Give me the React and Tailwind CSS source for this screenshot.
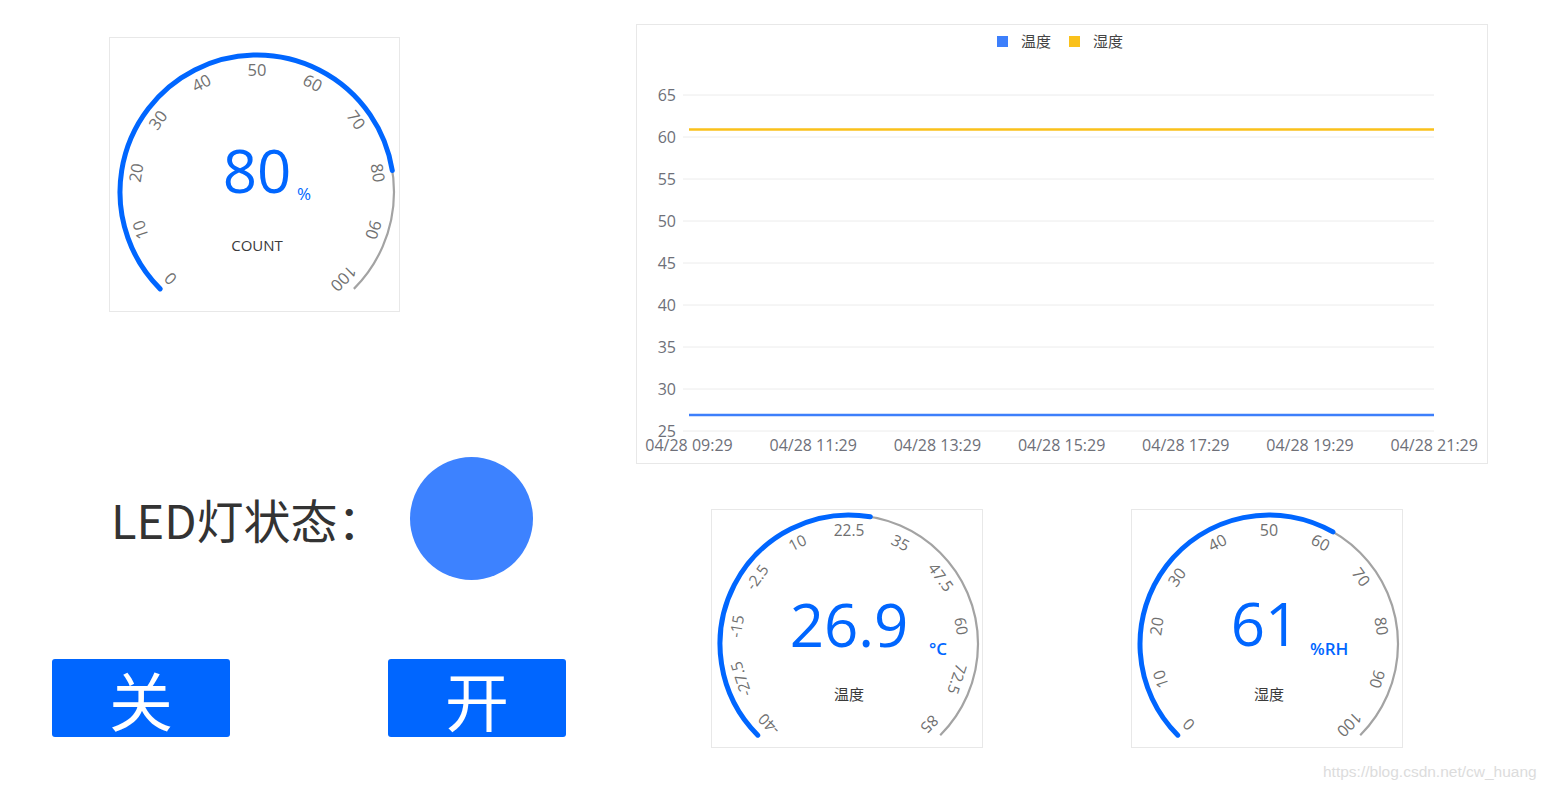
import React from "react";

const blue = "#0066ff";

function pt(cx, cy, r, a) {
  const t = (a * Math.PI) / 180;
  return [cx + r * Math.cos(t), cy - r * Math.sin(t)];
}

function Gauge({ w, h, cx, cy, r, lr, min, max, value, ticks, tickClass, valueText, valueX, valueY, unit, unitX, unitY, unitClass, name, nameY }) {
  const [sx, sy] = pt(cx, cy, r, 225);
  const [ex, ey] = pt(cx, cy, r, -45);
  const frac = (value - min) / (max - min);
  const endA = 225 - frac * 270;
  const [px, py] = pt(cx, cy, r, endA);
  const large = frac * 270 > 180 ? 1 : 0;

  return (
    <svg width={w} height={h} className="block">
      <path d={`M${sx} ${sy} A${r} ${r} 0 1 1 ${ex} ${ey}`} fill="none" stroke="#a3a3a3" strokeWidth="2.2" />
      <path d={`M${sx} ${sy} A${r} ${r} 0 ${large} 1 ${px} ${py}`} fill="none" stroke={blue} strokeWidth="5" strokeLinecap="round" />
      {ticks.map((t, i) => {
        const a = 225 - (i * 270) / (ticks.length - 1);
        const [x, y] = pt(cx, cy, lr, a);
        return (
          <text
            key={t}
            x={x}
            y={y}
            textAnchor="middle"
            dominantBaseline="central"
            transform={`rotate(${90 - a} ${x} ${y})`}
            className={tickClass}
          >
            {t}
          </text>
        );
      })}
      <text x={valueX} y={valueY} textAnchor="middle" className="fill-[#0066ff] text-[60px]">
        {valueText}
      </text>
      <text x={unitX} y={unitY} className={unitClass}>
        {unit}
      </text>
      <text x={cx} y={nameY} textAnchor="middle" dominantBaseline="central" className="fill-[#3a3a3a] text-[15px]">
        {name}
      </text>
    </svg>
  );
}

function Chart() {
  const yLabels = [65, 60, 55, 50, 45, 40, 35, 30, 25];
  const xLabels = ["04/28 09:29", "04/28 11:29", "04/28 13:29", "04/28 15:29", "04/28 17:29", "04/28 19:29", "04/28 21:29"];
  return (
    <svg width="850" height="438" className="block">
      <rect x="360" y="11" width="11" height="11" fill="#3d7ffb" />
      <text x="384" y="16" dominantBaseline="central" className="fill-[#444] text-[15px]">温度</text>
      <rect x="432" y="11" width="11" height="11" fill="#fac11b" />
      <text x="456" y="16" dominantBaseline="central" className="fill-[#444] text-[15px]">湿度</text>
      {yLabels.map((v, i) => {
        const y = 70 + i * 42;
        return (
          <g key={v}>
            <line x1="46" x2="797" y1={y} y2={y} stroke="#ececec" strokeWidth="1" />
            <text x="39" y={y} textAnchor="end" dominantBaseline="central" className="fill-[#6e7079] text-[16px]">
              {v}
            </text>
          </g>
        );
      })}
      <line x1="52" x2="797" y1="104.5" y2="104.5" stroke="#fac11b" strokeWidth="2.5" />
      <line x1="52" x2="797" y1="390" y2="390" stroke="#3d7ffb" strokeWidth="2.5" />
      {xLabels.map((l, i) => (
        <text key={l} x={52 + i * 124.2} y="420" textAnchor="middle" dominantBaseline="central" className="fill-[#6e7079] text-[16px]">
          {l}
        </text>
      ))}
    </svg>
  );
}

const ticks100 = ["0", "10", "20", "30", "40", "50", "60", "70", "80", "90", "100"];

export default function App() {
  return (
    <div className="relative flex w-[1550px] h-[788px] overflow-hidden bg-white font-['Open_Sans','Noto_Sans_CJK_SC',sans-serif]">
      <div className="flex w-[636px] shrink-0 flex-col">
        <div className="ml-[109px] mt-[37px] w-[291px] h-[275px] border border-[#e8e8e8]">
          <Gauge
            w={289}
            h={273}
            cx={147}
            cy={154}
            r={137}
            lr={123}
            min={0}
            max={100}
            value={80}
            ticks={ticks100}
            tickClass="fill-[#707070] text-[16.5px]"
            valueText="80"
            valueX={147}
            valueY={155}
            unit="%"
            unitX={187}
            unitY={162}
            unitClass="fill-[#0066ff] text-[17px]"
            name="COUNT"
            nameY={207}
          />
        </div>

        <div className="mt-[145px] flex h-[123px] items-center">
          <div className="ml-[111px] w-[299px] font-['Noto_Sans_CJK_SC',sans-serif] text-[47px] leading-none text-[#333]">
            LED灯状态：
          </div>
          <div className="h-[123px] w-[123px] rounded-full bg-[#3d82ff]" />
        </div>

        <div className="mt-[79px] flex gap-[158px] pl-[52px]">
          <button type="button" className="flex h-[78px] w-[178px] items-center justify-center rounded-[3px] bg-[#0066ff] font-['Noto_Sans_CJK_SC',sans-serif] text-[64px] leading-none text-white">
            关
          </button>
          <button type="button" className="flex h-[78px] w-[178px] items-center justify-center rounded-[3px] bg-[#0066ff] font-['Noto_Sans_CJK_SC',sans-serif] text-[64px] leading-none text-white">
            开
          </button>
        </div>
      </div>

      <div className="flex flex-1 flex-col">
        <div className="mt-[24px] w-[852px] h-[440px] border border-[#e8e8e8]">
          <Chart />
        </div>
        <div className="mt-[45px] flex gap-[148px] pl-[75px]">
          <div className="w-[272px] h-[239px] border border-[#e8e8e8]">
            <Gauge
              w={270}
              h={237}
              cx={137}
              cy={134}
              r={129}
              lr={114}
              min={-40}
              max={85}
              value={26.9}
              ticks={["-40", "-27.5", "-15", "-2.5", "10", "22.5", "35", "47.5", "60", "72.5", "85"]}
              tickClass="fill-[#707070] text-[15.5px]"
              valueText="26.9"
              valueX={137}
              valueY={137}
              unit="°C"
              unitX={217}
              unitY={145}
              unitClass="fill-[#0066ff] text-[17px] font-semibold"
              name="温度"
              nameY={184}
            />
          </div>
          <div className="w-[272px] h-[239px] border border-[#e8e8e8]">
            <Gauge
              w={270}
              h={237}
              cx={137}
              cy={134}
              r={129}
              lr={114}
              min={0}
              max={100}
              value={61}
              ticks={ticks100}
              tickClass="fill-[#707070] text-[16px]"
              valueText="61"
              valueX={133}
              valueY={136}
              unit="%RH"
              unitX={178}
              unitY={145}
              unitClass="fill-[#0066ff] text-[17px] font-semibold"
              name="湿度"
              nameY={184}
            />
          </div>
        </div>
      </div>

      <div className="absolute left-[1323px] top-[760px] font-['Liberation_Sans',sans-serif] text-[15.5px] text-[#dcdcdc]">
        https://blog.csdn.net/cw_huang
      </div>
    </div>
  );
}
